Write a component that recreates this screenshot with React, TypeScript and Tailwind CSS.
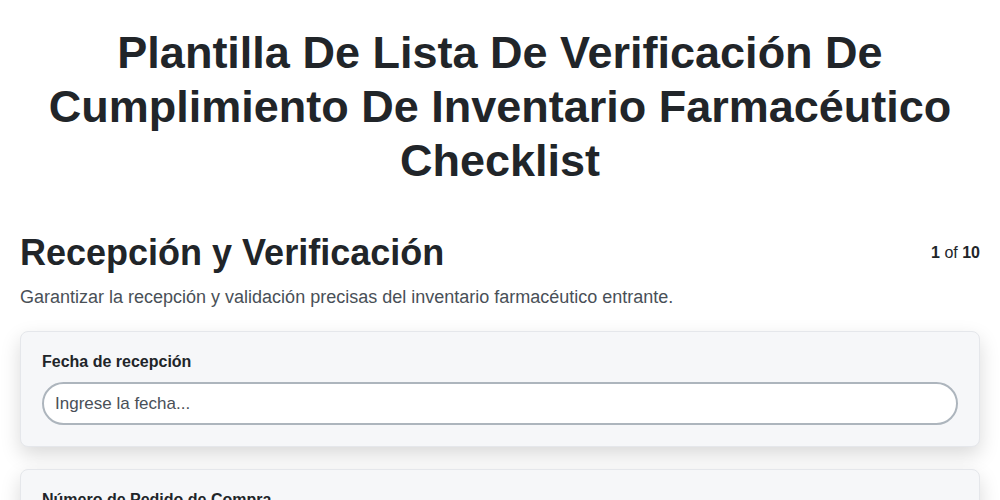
import React from "react";

export default function App() {
  return (
    <div className="min-h-screen bg-white text-[#212529]" style={{ fontFamily: '"Liberation Sans", Arial, sans-serif' }}>
      <div className="px-5 pt-[26px]">
        <h1 className="text-center text-[45px] leading-[54px] font-bold px-6">
          Plantilla De Lista De Verificación De Cumplimiento De Inventario Farmacéutico Checklist
        </h1>
        <div className="mt-[43px] flex items-start justify-between">
          <h2 className="text-[36px] leading-[44px] font-bold">Recepción y Verificación</h2>
          <div className="pt-[10px] text-[16px]">
            <span className="font-bold">1</span> of <span className="font-bold">10</span>
          </div>
        </div>
        <p className="mt-[8px] text-[18px] leading-[28px] text-[#495057]">
          Garantizar la recepción y validación precisas del inventario farmacéutico entrante.
        </p>
        <div className="mt-[20px] flex flex-col gap-[22px]">
          <div className="rounded-lg border border-[#e5e7eb] bg-[#f6f7f9] px-[21px] pt-[20px] pb-[21px] shadow-[0_8px_20px_rgba(0,0,0,0.15)]">
            <label className="block text-[16px] leading-[20px] font-bold">Fecha de recepción</label>
            <input
              className="mt-[10px] w-full h-[43px] rounded-full border-2 border-[#adb5bd] bg-white px-[11px] text-[17px] placeholder-[#495057] outline-none"
              placeholder="Ingrese la fecha..."
            />
          </div>
          <div className="rounded-lg border border-[#e5e7eb] bg-[#f6f7f9] px-[21px] pt-[20px] pb-[21px] shadow-[0_8px_20px_rgba(0,0,0,0.15)]">
            <label className="block text-[16px] leading-[20px] font-bold">Número de Pedido de Compra</label>
            <input
              className="mt-[10px] w-full h-[43px] rounded-full border-2 border-[#adb5bd] bg-white px-[11px] text-[17px] placeholder-[#495057] outline-none"
              placeholder="Ingrese el número..."
            />
          </div>
        </div>
      </div>
    </div>
  );
}
